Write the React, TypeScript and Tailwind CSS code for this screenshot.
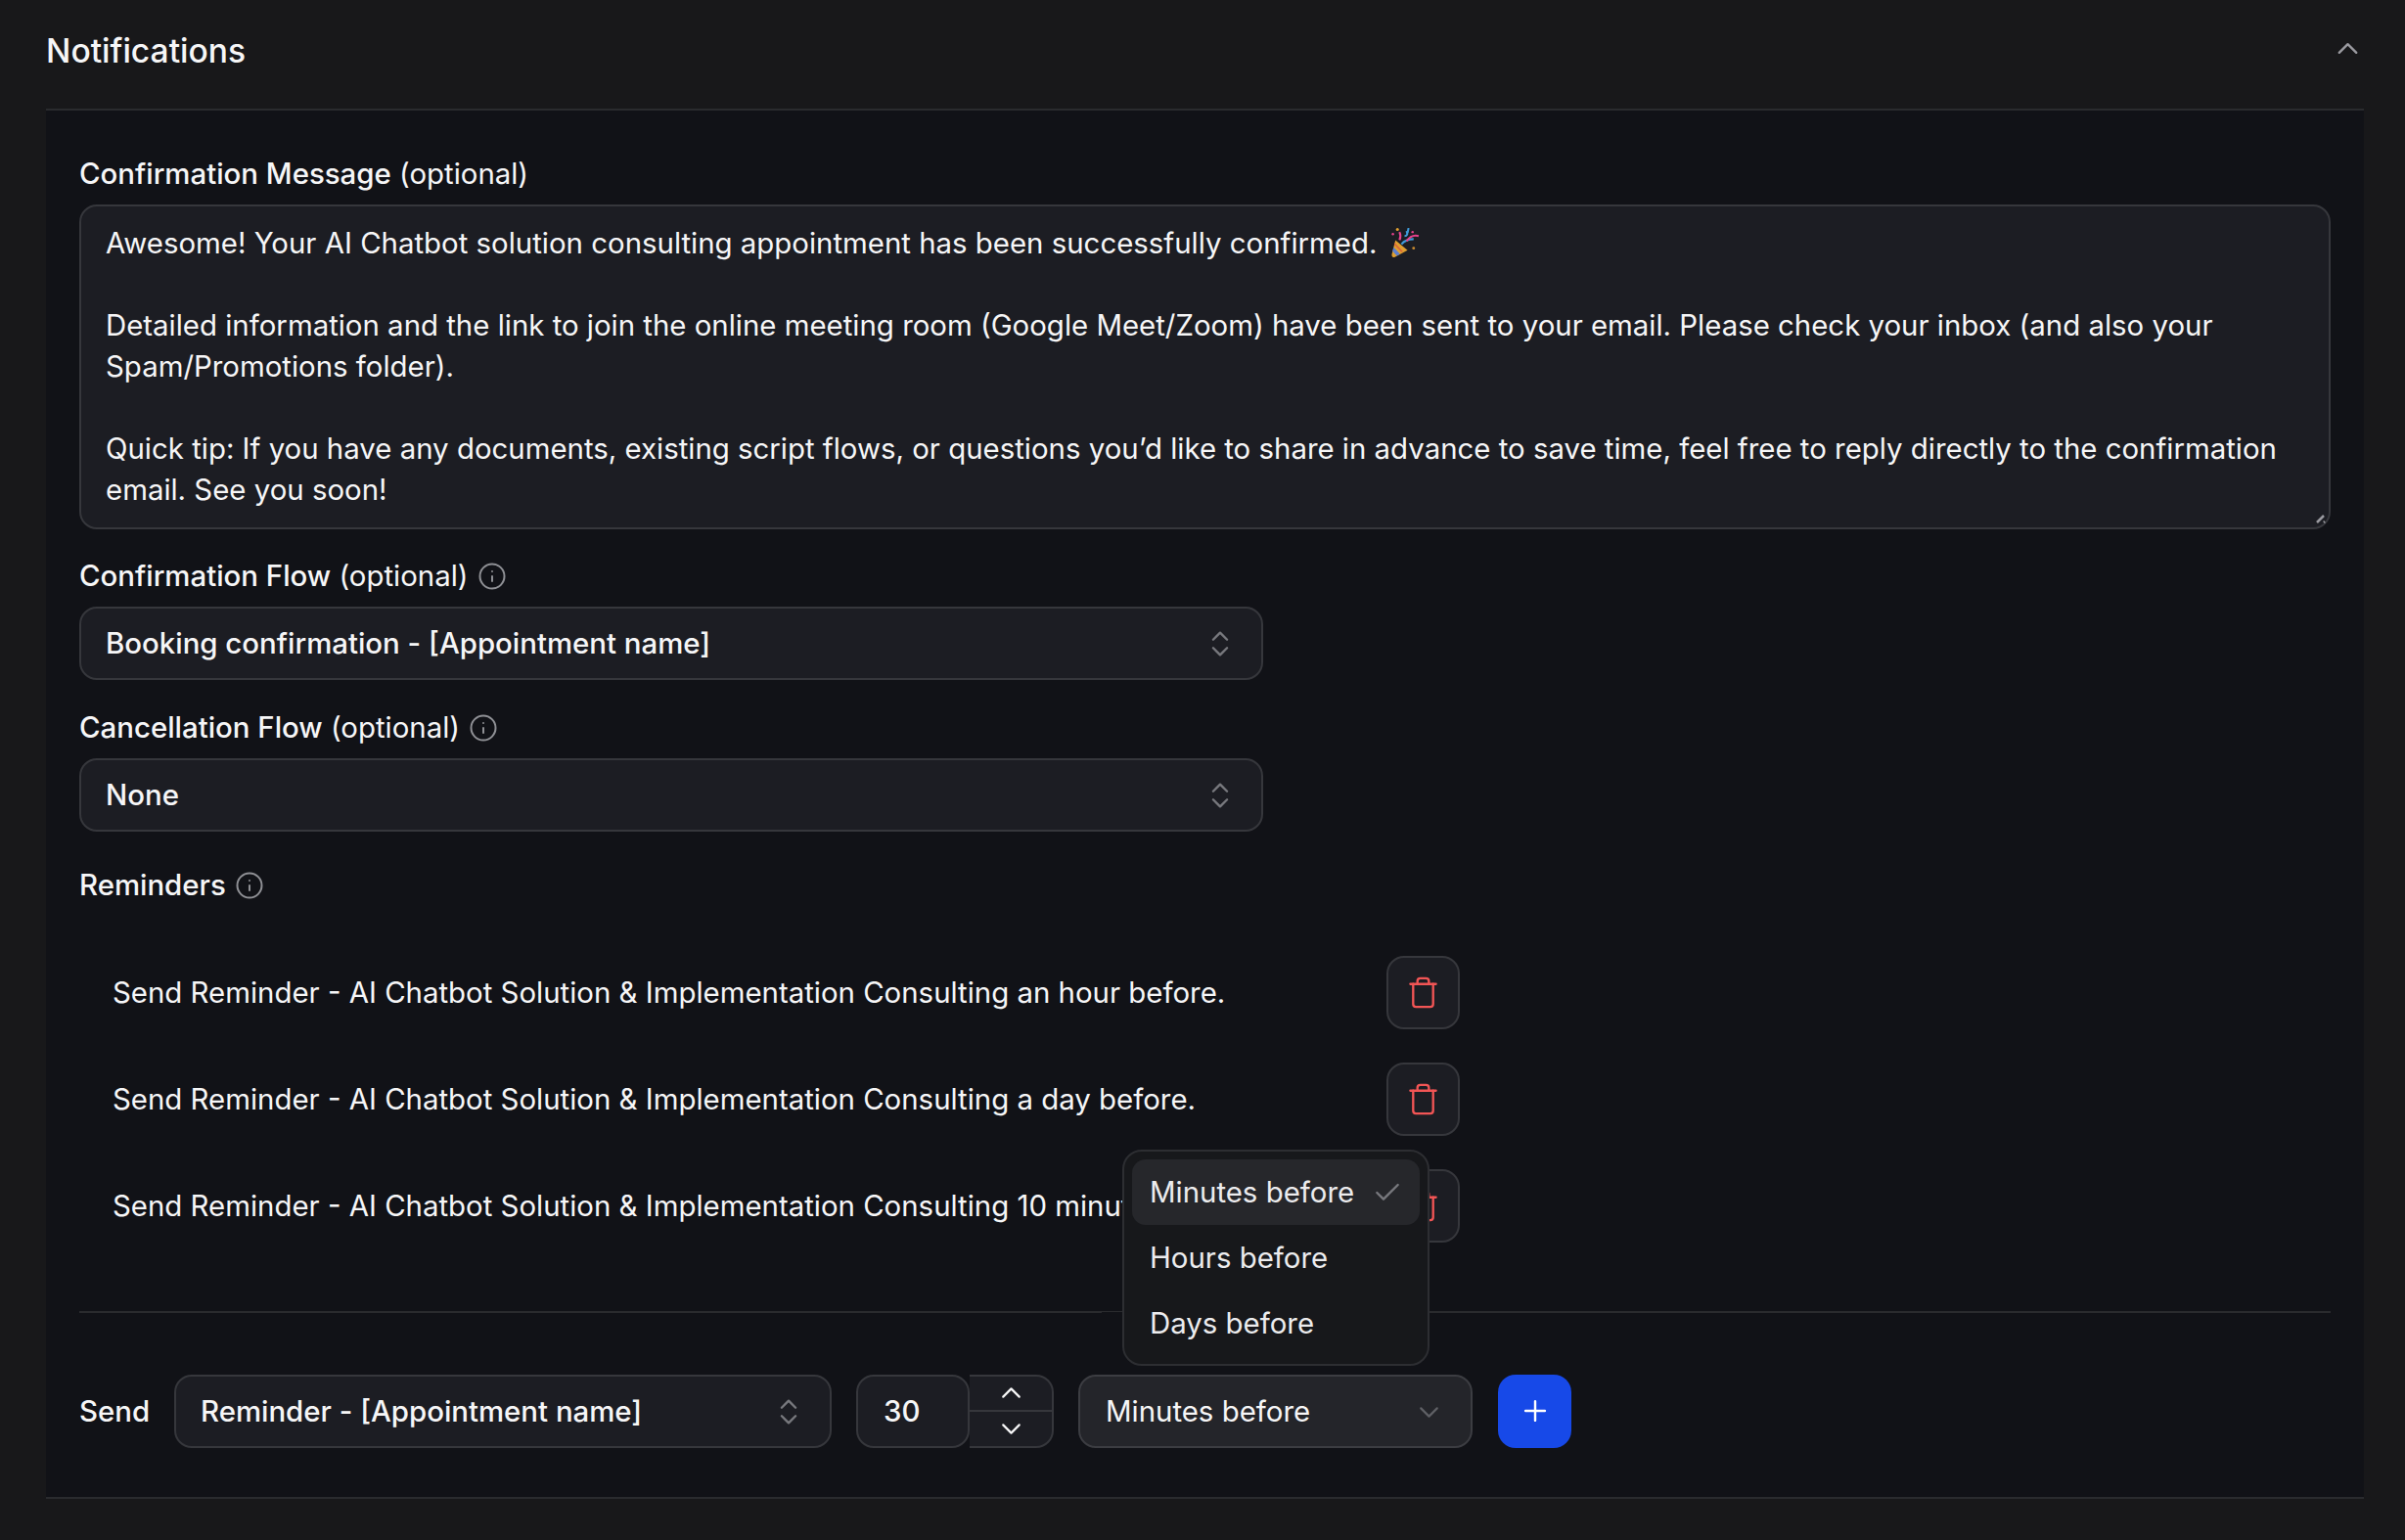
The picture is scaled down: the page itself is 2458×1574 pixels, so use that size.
import { Check, ChevronDown, ChevronUp, ChevronsUpDown, Info, Plus, Trash } from "lucide-react";

const reminders = [
  "Send Reminder - AI Chatbot Solution & Implementation Consulting an hour before.",
  "Send Reminder - AI Chatbot Solution & Implementation Consulting a day before.",
  "Send Reminder - AI Chatbot Solution & Implementation Consulting 10 minutes before.",
];

function PartyPopper() {
  return (
    <svg width="29" height="31" viewBox="0 0 28 30" className="inline-block align-[-5px] ml-[15px]">
      <path d="M4 12 L16 22 L3 29 Q0 29 0.5 26 Z" fill="#e0a030" />
      <path d="M2.2 19 L8.5 25.6 L5.4 27.6 L1.2 23 Z" fill="#5a7fd0" />
      <path d="M3.2 14.5 L11.5 23.2 L10 24 L2.8 16.4 Z" fill="#d8663c" />
      <path d="M10 16 Q14 11 22 11" fill="none" stroke="#3f9ad8" strokeWidth="2" />
      <path d="M8 12 Q10 8 8 4" fill="none" stroke="#e8428c" strokeWidth="2" />
      <path d="M13 8 Q17 8 15 3 M16 5 L17 0" fill="none" stroke="#3f9ad8" strokeWidth="2" />
      <path d="M15 13 Q20 6 27 8" fill="none" stroke="#e8428c" strokeWidth="2" />
      <circle cx="6" cy="1.5" r="1.5" fill="#e0a030" />
      <circle cx="1.5" cy="6" r="1.2" fill="#e8428c" />
      <circle cx="21" cy="4" r="1.2" fill="#e8428c" />
      <circle cx="22" cy="20" r="1.4" fill="#c88a30" />
    </svg>
  );
}

function Select({ label, className }: { label: string; className: string }) {
  return (
    <div className={`flex items-center justify-between h-[75px] pl-[25px] pr-[25px] bg-[#1c1d23] border-2 border-[#36373c] rounded-[18px] font-medium ${className}`}>
      <span>{label}</span>
      <ChevronsUpDown size={34} strokeWidth={1.7} className="text-[#77787d]" />
    </div>
  );
}

function FieldLabel({ title, optional, info }: { title: string; optional?: boolean; info?: boolean }) {
  return (
    <div className="flex items-center gap-[9px] h-[42px]">
      <span className="font-medium">
        {title}
        {optional && <span className="font-normal"> (optional)</span>}
      </span>
      {info && <Info size={30} strokeWidth={1.6} className="text-[#8f9095]" />}
    </div>
  );
}

export default function App() {
  return (
    <div className="min-h-[1574px] bg-[#18181a] pl-[47px] pr-[42px] font-[Inter,sans-serif] text-[29.4px] leading-[42px] text-[#f6f6f7]">
      {/* Header */}
      <div className="flex items-center justify-between h-[113px] pb-[8px] border-b-2 border-[#2a2b2e]">
        <h2 className="text-[33.6px] font-medium">Notifications</h2>
        <ChevronUp size={35} strokeWidth={1.6} className="text-[#9a9aa0] mt-[-5px] mr-[-1px]" />
      </div>

      <div className="bg-[#111217] px-[34px] pt-[44px] pb-[50px] border-b-2 border-[#2a2b2e]">
        {/* Confirmation message */}
        <FieldLabel title="Confirmation Message" optional />
        <div className="relative mt-[10px] h-[332px] px-[25px] py-[17px] bg-[#1c1d23] border-2 border-[#36373c] rounded-[18px]">
          <p>
            Awesome! Your AI Chatbot solution consulting appointment has been successfully confirmed.
            <PartyPopper />
          </p>
          <p className="mt-[42px]">
            Detailed information and the link to join the online meeting room (Google Meet/Zoom) have been sent to your email. Please check your inbox (and also your Spam/Promotions folder).
          </p>
          <p className="mt-[42px]">
            Quick tip: If you have any documents, existing script flows, or questions you’d like to share in advance to save time, feel free to reply directly to the confirmation email. See you soon!
          </p>
          <svg width="14" height="14" viewBox="0 0 14 14" className="absolute right-[1px] bottom-[1px]">
            <path d="M3 10 L10 3 M10 10 L11 9" stroke="#9a9aa0" strokeWidth="2.5" />
          </svg>
        </div>

        {/* Flows */}
        <div className="mt-[27px]">
          <FieldLabel title="Confirmation Flow" optional info />
        </div>
        <Select label="Booking confirmation - [Appointment name]" className="mt-[10px] w-[1210px]" />
        <div className="mt-[28px]">
          <FieldLabel title="Cancellation Flow" optional info />
        </div>
        <Select label="None" className="mt-[10px] w-[1210px]" />

        {/* Reminders */}
        <div className="mt-[34px]">
          <FieldLabel title="Reminders" info />
        </div>
        <div className="mt-[51px] flex flex-col gap-[34.5px] w-[1411px]">
          {reminders.map((r) => (
            <div key={r} className="flex items-center justify-between h-[74.5px] pl-[34px]">
              <span className="pt-[2px]">{r}</span>
              <button className="flex items-center justify-center w-[75px] h-[74.5px] bg-[#1c1d23] border-2 border-[#36373c] rounded-[18px] text-[#f25555]">
                <Trash size={35} strokeWidth={1.6} />
              </button>
            </div>
          ))}
        </div>

        <div className="mt-[70px] h-[2px] bg-[#2a2b2e]" />

        {/* Add reminder */}
        <div className="mt-[63px] flex items-center gap-[26px]">
          <span className="font-medium w-[71px] pt-[1px]">Send</span>
          <Select label="Reminder - [Appointment name]" className="w-[672px] pt-[2px]" />
          <div className="flex -ml-[1px] -mr-[1px]">
            <div className="flex items-center w-[116px] h-[75px] pl-[26px] pt-[2px] bg-[#1c1d23] border-2 border-[#36373c] rounded-[18px] font-medium">30</div>
            <div className="flex flex-col w-[86px] h-[75px] bg-[#1c1d23] border-y-2 border-r-2 border-[#36373c] rounded-r-[18px]">
              <div className="flex-1 flex items-center justify-center border-b-2 border-[#36373c]">
                <ChevronUp size={33} strokeWidth={1.6} />
              </div>
              <div className="flex-1 flex items-center justify-center">
                <ChevronDown size={33} strokeWidth={1.6} />
              </div>
            </div>
          </div>
          <div className="relative">
            <div className="flex items-center justify-between w-[403px] h-[75px] pl-[26px] pr-[26px] pt-[2px] bg-[#24252a] border-2 border-[#3c3d42] rounded-[18px]">
              <span>Minutes before</span>
              <ChevronDown size={33} strokeWidth={1.6} className="text-[#5f6065]" />
            </div>
            {/* Open menu */}
            <div className="absolute left-[45px] bottom-[84px] w-[314px] h-[221px] p-[8px] bg-[#17181b] border-2 border-[#2d2e32] rounded-[20px] text-[#ececee]">
              <div className="absolute left-[-23px] top-[164px] w-[21px] h-[4px] bg-[#111217]" />
              <div className="flex items-center justify-between h-[67px] pl-[18px] pr-[17px] pt-[2px] bg-[#26272b] rounded-[14px]">
                <span>Minutes before</span>
                <Check size={32} strokeWidth={1.8} className="text-[#77787d]" />
              </div>
              <div className="flex items-center h-[67px] pl-[18px] pt-[2px]">Hours before</div>
              <div className="flex items-center h-[67px] pl-[18px] pt-[2px]">Days before</div>
            </div>
          </div>
          <button className="flex items-center justify-center w-[75px] h-[75px] bg-[#1749e8] rounded-[18px] text-white">
            <Plus size={34} strokeWidth={1.7} />
          </button>
        </div>
      </div>
    </div>
  );
}
